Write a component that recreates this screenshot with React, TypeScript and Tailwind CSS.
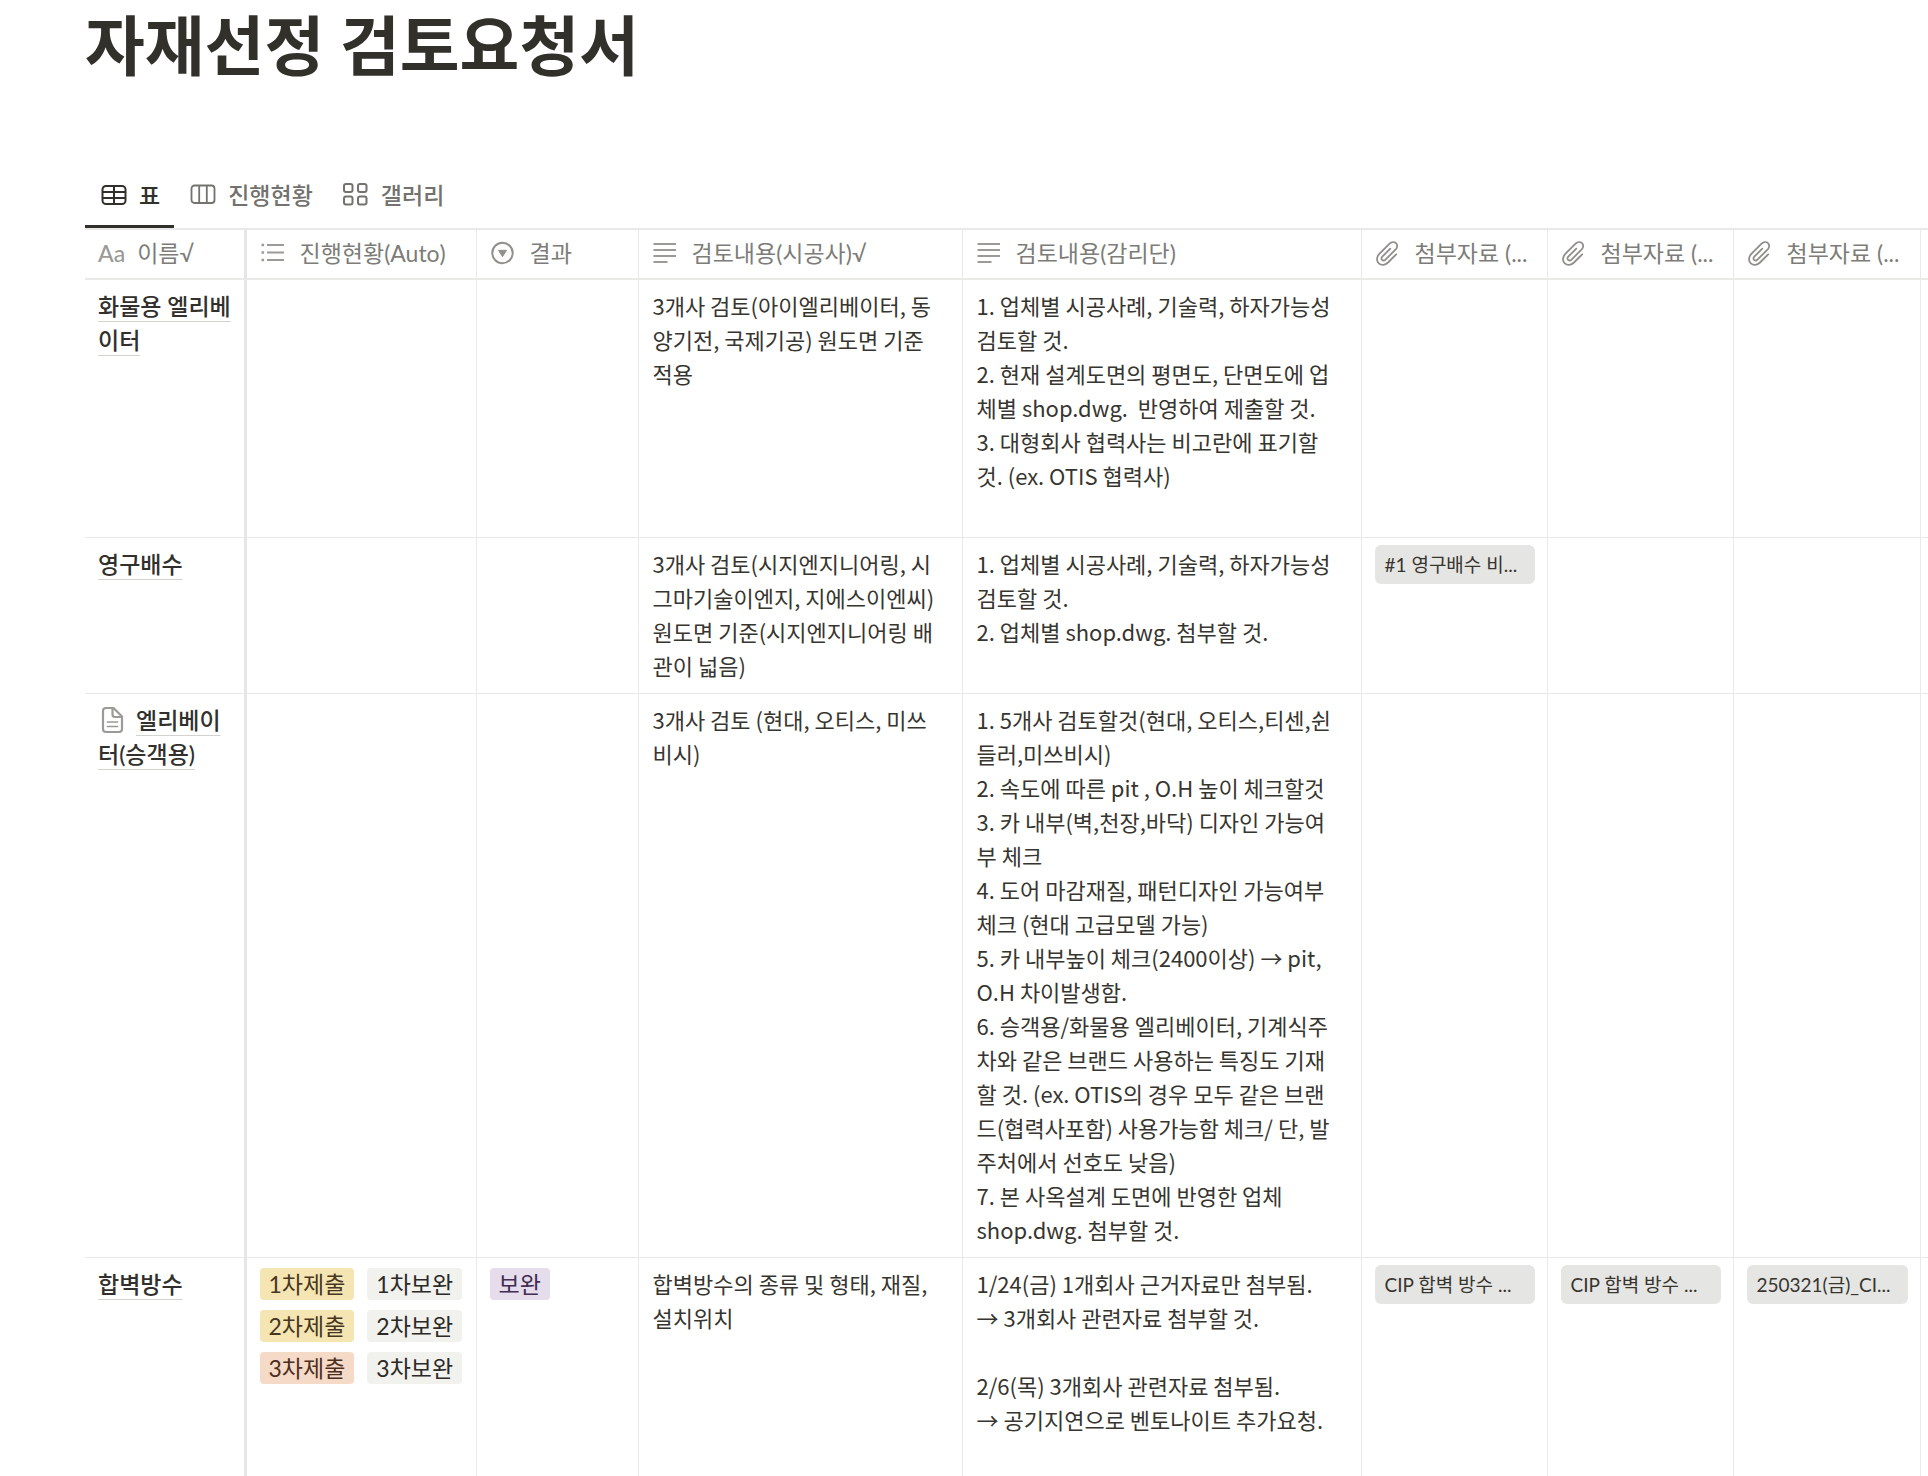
import type { ReactNode } from "react";

type Tag = { label: string; tone: "yellow" | "gray" | "orange" | "purple" };

type Row = {
  name: string;
  page?: boolean;
  progress?: Tag[];
  result?: Tag;
  contractor: string;
  supervisor: string;
  files: [string?, string?, string?];
};

const ROWS: Row[] = [
  {
    name: "화물용 엘리베\n이터",
    contractor: "3개사 검토(아이엘리베이터, 동\n양기전, 국제기공) 원도면 기준\n적용",
    supervisor:
      "1. 업체별 시공사례, 기술력, 하자가능성\n검토할 것.\n2. 현재 설계도면의 평면도, 단면도에 업\n체별 shop.dwg.  반영하여 제출할 것.\n3. 대형회사 협력사는 비고란에 표기할\n것. (ex. OTIS 협력사)\n\u00a0",
    files: [],
  },
  {
    name: "영구배수",
    contractor:
      "3개사 검토(시지엔지니어링, 시\n그마기술이엔지, 지에스이엔씨)\n원도면 기준(시지엔지니어링 배\n관이 넓음)",
    supervisor:
      "1. 업체별 시공사례, 기술력, 하자가능성\n검토할 것.\n2. 업체별 shop.dwg. 첨부할 것.",
    files: ["#1 영구배수 비..."],
  },
  {
    name: "엘리베이\n터(승객용)",
    page: true,
    contractor: "3개사 검토 (현대, 오티스, 미쓰\n비시)",
    supervisor:
      "1. 5개사 검토할것(현대, 오티스,티센,쉰\n들러,미쓰비시)\n2. 속도에 따른 pit , O.H 높이 체크할것\n3. 카 내부(벽,천장,바닥) 디자인 가능여\n부 체크\n4. 도어 마감재질, 패턴디자인 가능여부\n체크 (현대 고급모델 가능)\n5. 카 내부높이 체크(2400이상) → pit,\nO.H 차이발생함.\n6. 승객용/화물용 엘리베이터, 기계식주\n차와 같은 브랜드 사용하는 특징도 기재\n할 것. (ex. OTIS의 경우 모두 같은 브랜\n드(협력사포함) 사용가능함 체크/ 단, 발\n주처에서 선호도 낮음)\n7. 본 사옥설계 도면에 반영한 업체\nshop.dwg. 첨부할 것.",
    files: [],
  },
  {
    name: "합벽방수",
    progress: [
      { label: "1차제출", tone: "yellow" },
      { label: "1차보완", tone: "gray" },
      { label: "2차제출", tone: "yellow" },
      { label: "2차보완", tone: "gray" },
      { label: "3차제출", tone: "orange" },
      { label: "3차보완", tone: "gray" },
    ],
    result: { label: "보완", tone: "purple" },
    contractor: "합벽방수의 종류 및 형태, 재질,\n설치위치",
    supervisor:
      "1/24(금) 1개회사 근거자료만 첨부됨.\n→ 3개회사 관련자료 첨부할 것.\n\n2/6(목) 3개회사 관련자료 첨부됨.\n→ 공기지연으로 벤토나이트 추가요청.\n\u00a0",
    files: ["CIP 합벽 방수 ...", "CIP 합벽 방수 ...", "250321(금)_CI..."],
  },
];

const TONES: Record<Tag["tone"], string> = {
  yellow: "bg-[#f5e5b3] text-[#47371f]",
  gray: "bg-[#f1f1ee] text-[#2b2a27]",
  orange: "bg-[#f6dac8] text-[#4d2f1f]",
  purple: "bg-[#e5dcec] text-[#432d50]",
};

export default function App() {
  return (
    <main className="h-screen overflow-hidden bg-white pl-[85px] font-[Lato,'Noto_Sans_CJK_KR',sans-serif] text-[23px] leading-[34px] text-[#37352f]">
      <h1 className="pt-[3px] text-[65px] leading-[84px] font-bold text-[#32302b]">
        자재선정 검토요청서
      </h1>

      <div role="tablist" className="mt-[78px] flex h-[63px] font-medium text-[#73726e]">
        <ViewTab active icon={<TableIcon />} label="표" />
        <ViewTab icon={<BoardIcon />} label="진행현황" />
        <ViewTab icon={<GalleryIcon />} label="갤러리" />
      </div>

      <table className="w-full table-fixed border-collapse border-t-2 border-[#e9e9e8]">
        <colgroup>
          <col className="w-[160px]" />
          <col className="w-[231px]" />
          <col className="w-[162px]" />
          <col className="w-[324px]" />
          <col className="w-[399px]" />
          <col className="w-[186px]" />
          <col className="w-[186px]" />
          <col className="w-[187px]" />
          <col />
        </colgroup>
        <thead>
          <tr className="h-[50px] border-b-2 border-[#e9e9e8] text-[#7d7c78]">
            <Head pinned icon={<span className="font-medium text-[#9b9a97]">Aa</span>} label="이름√" />
            <Head icon={<ListIcon />} label="진행현황(Auto)" />
            <Head icon={<SelectIcon />} label="결과" />
            <Head icon={<TextIcon />} label="검토내용(시공사)√" />
            <Head icon={<TextIcon />} label="검토내용(감리단)" />
            <Head icon={<ClipIcon />} label="첨부자료 (..." />
            <Head icon={<ClipIcon />} label="첨부자료 (..." />
            <Head icon={<ClipIcon />} label="첨부자료 (..." />
            <td />
          </tr>
        </thead>
        <tbody>
          {ROWS.map((row) => (
            <tr key={row.name} className="border-b border-[#e9e9e8] align-top">
              <td className="border-r-3 border-[#e6e6e5] pt-[9px] pb-[10px] pl-[13px] font-medium whitespace-pre text-[#32302c]">
                {row.page && <PageIcon />}
                <a
                  href="#"
                  className="underline decoration-[#d3d2cf] decoration-1 underline-offset-[6px] [text-decoration-skip-ink:none]"
                >
                  {row.name}
                </a>
              </td>
              <td className="border-r border-[#e9e9e8] pt-[10px] pl-[13px]">
                {row.progress && (
                  <div className="flex flex-wrap gap-x-[13px] gap-y-[10px]">
                    {row.progress.map((tag) => (
                      <TagChip key={tag.label} tag={tag} />
                    ))}
                  </div>
                )}
              </td>
              <td className="border-r border-[#e9e9e8] pt-[10px] pl-[13px]">
                {row.result && (
                  <div className="flex">
                    <TagChip tag={row.result} />
                  </div>
                )}
              </td>
              <TextCell>{row.contractor}</TextCell>
              <TextCell>{row.supervisor}</TextCell>
              {[0, 1, 2].map((i) => (
                <td key={i} className="border-r border-[#e9e9e8] pt-[7px] pr-3 pl-[13px]">
                  {row.files[i] && (
                    <button
                      type="button"
                      className="block h-[39px] w-full overflow-hidden rounded-md bg-[#e5e5e3] pl-[10px] text-left text-[19px] whitespace-nowrap"
                    >
                      {row.files[i]}
                    </button>
                  )}
                </td>
              ))}
              <td />
            </tr>
          ))}
        </tbody>
      </table>
    </main>
  );
}

function TextCell({ children }: { children: ReactNode }) {
  return (
    <td className="border-r border-[#e9e9e8] pt-2 pb-[11px] pl-[14px] font-['Noto_Sans_CJK_KR',sans-serif] text-[22px] whitespace-pre">
      {children}
    </td>
  );
}

function ViewTab({ icon, label, active }: { icon: ReactNode; label: string; active?: boolean }) {
  return (
    <button
      type="button"
      role="tab"
      aria-selected={!!active}
      className={`flex items-center gap-3 border-b-3 pr-[14px] pl-4 ${
        active ? "border-[#32302b] text-[#32302b]" : "border-transparent"
      }`}
    >
      {icon}
      {label}
    </button>
  );
}

function Head({ icon, label, pinned }: { icon: ReactNode; label: string; pinned?: boolean }) {
  return (
    <th
      scope="col"
      className={`overflow-hidden pb-[2px] pl-[13px] text-left font-normal whitespace-nowrap ${
        pinned ? "border-r-3 border-[#e6e6e5]" : "border-r border-[#e9e9e8]"
      }`}
    >
      <span className={`flex items-center ${pinned ? "gap-3" : "gap-[14px]"}`}>
        {icon}
        {label}
      </span>
    </th>
  );
}

function TagChip({ tag }: { tag: Tag }) {
  return (
    <span className={`flex h-8 items-center rounded px-[9px] ${TONES[tag.tone]}`}>{tag.label}</span>
  );
}

function Icon({ children, className = "" }: { children: ReactNode; className?: string }) {
  return (
    <svg
      width="26"
      height="26"
      viewBox="0 0 26 26"
      fill="none"
      stroke="currentColor"
      strokeWidth="2"
      className={`shrink-0 ${className}`}
      aria-hidden
    >
      {children}
    </svg>
  );
}

function TableIcon() {
  return (
    <Icon>
      <rect x="1.5" y="4" width="23" height="18" rx="3.5" />
      <path d="M1.5 10h23M1.5 16h23M13 4v18" />
    </Icon>
  );
}

function BoardIcon() {
  return (
    <Icon>
      <rect x="1.5" y="3.5" width="23" height="17.5" rx="3" strokeWidth="1.8" />
      <path d="M9.2 3.5V21M16.8 3.5V21" strokeWidth="1.8" />
    </Icon>
  );
}

function GalleryIcon() {
  return (
    <Icon>
      <rect x="1" y="2" width="8.5" height="8" rx="2" />
      <rect x="15" y="2" width="8.5" height="8" rx="2" />
      <rect x="1" y="14.5" width="8.5" height="8" rx="2" />
      <rect x="15" y="14.5" width="8.5" height="8" rx="2" />
    </Icon>
  );
}

function ListIcon() {
  return (
    <Icon className="text-[#9b9a97]">
      <path d="M7 5H24M7 12.5H24M7 20H24" />
      <path d="M1.5 5h2.6M1.5 12.5h2.6M1.5 20h2.6" strokeWidth="2.6" />
    </Icon>
  );
}

function SelectIcon() {
  return (
    <Icon className="text-[#91908d]">
      <circle cx="12.5" cy="13" r="10.2" />
      <path d="M8.5 10.3h8l-4 6.4z" fill="currentColor" strokeWidth="1" strokeLinejoin="round" />
    </Icon>
  );
}

function TextIcon() {
  return (
    <Icon className="text-[#9b9a97]">
      <path d="M1.5 4H24M1.5 10H24M1.5 16H24M1.5 22h14" />
    </Icon>
  );
}

function ClipIcon() {
  return (
    <Icon className="text-[#8f8e8b]">
      <path
        d="M21.2 14.3l-8.2 8.2c-2.8 2.8-6.7 3.1-9.2.8-2.5-2.4-2.3-6.4.3-9.1L14.6 3.7c1.9-1.9 4.7-2.1 6.400-.5 1.700 1.600 1.500 4.300-.3 6.200l-10.200 10.200c-1 1-2.500 1.100-3.400.3-.9-.9-.8-2.300.2-3.300l8-8"
        strokeWidth="1.8"
        strokeLinecap="round"
        strokeLinejoin="round"
      />
    </Icon>
  );
}

function PageIcon() {
  return (
    <svg
      width="28"
      height="28"
      viewBox="0 0 28 28"
      fill="none"
      stroke="#9b9a97"
      strokeWidth="2.2"
      strokeLinejoin="round"
      className="mr-[10px] inline-block align-[-5px]"
      aria-hidden
    >
      <path d="M8 2h7.5L24 10.5V23a3 3 0 0 1-3 3H8a3 3 0 0 1-3-3V5a3 3 0 0 1 3-3z" />
      <path d="M14.5 2v6.5a2.5 2.5 0 0 0 2.5 2.5h7" />
      <path d="M9.5 16h10M9.5 20.5h10" strokeLinecap="round" strokeWidth="1.7" />
    </svg>
  );
}
